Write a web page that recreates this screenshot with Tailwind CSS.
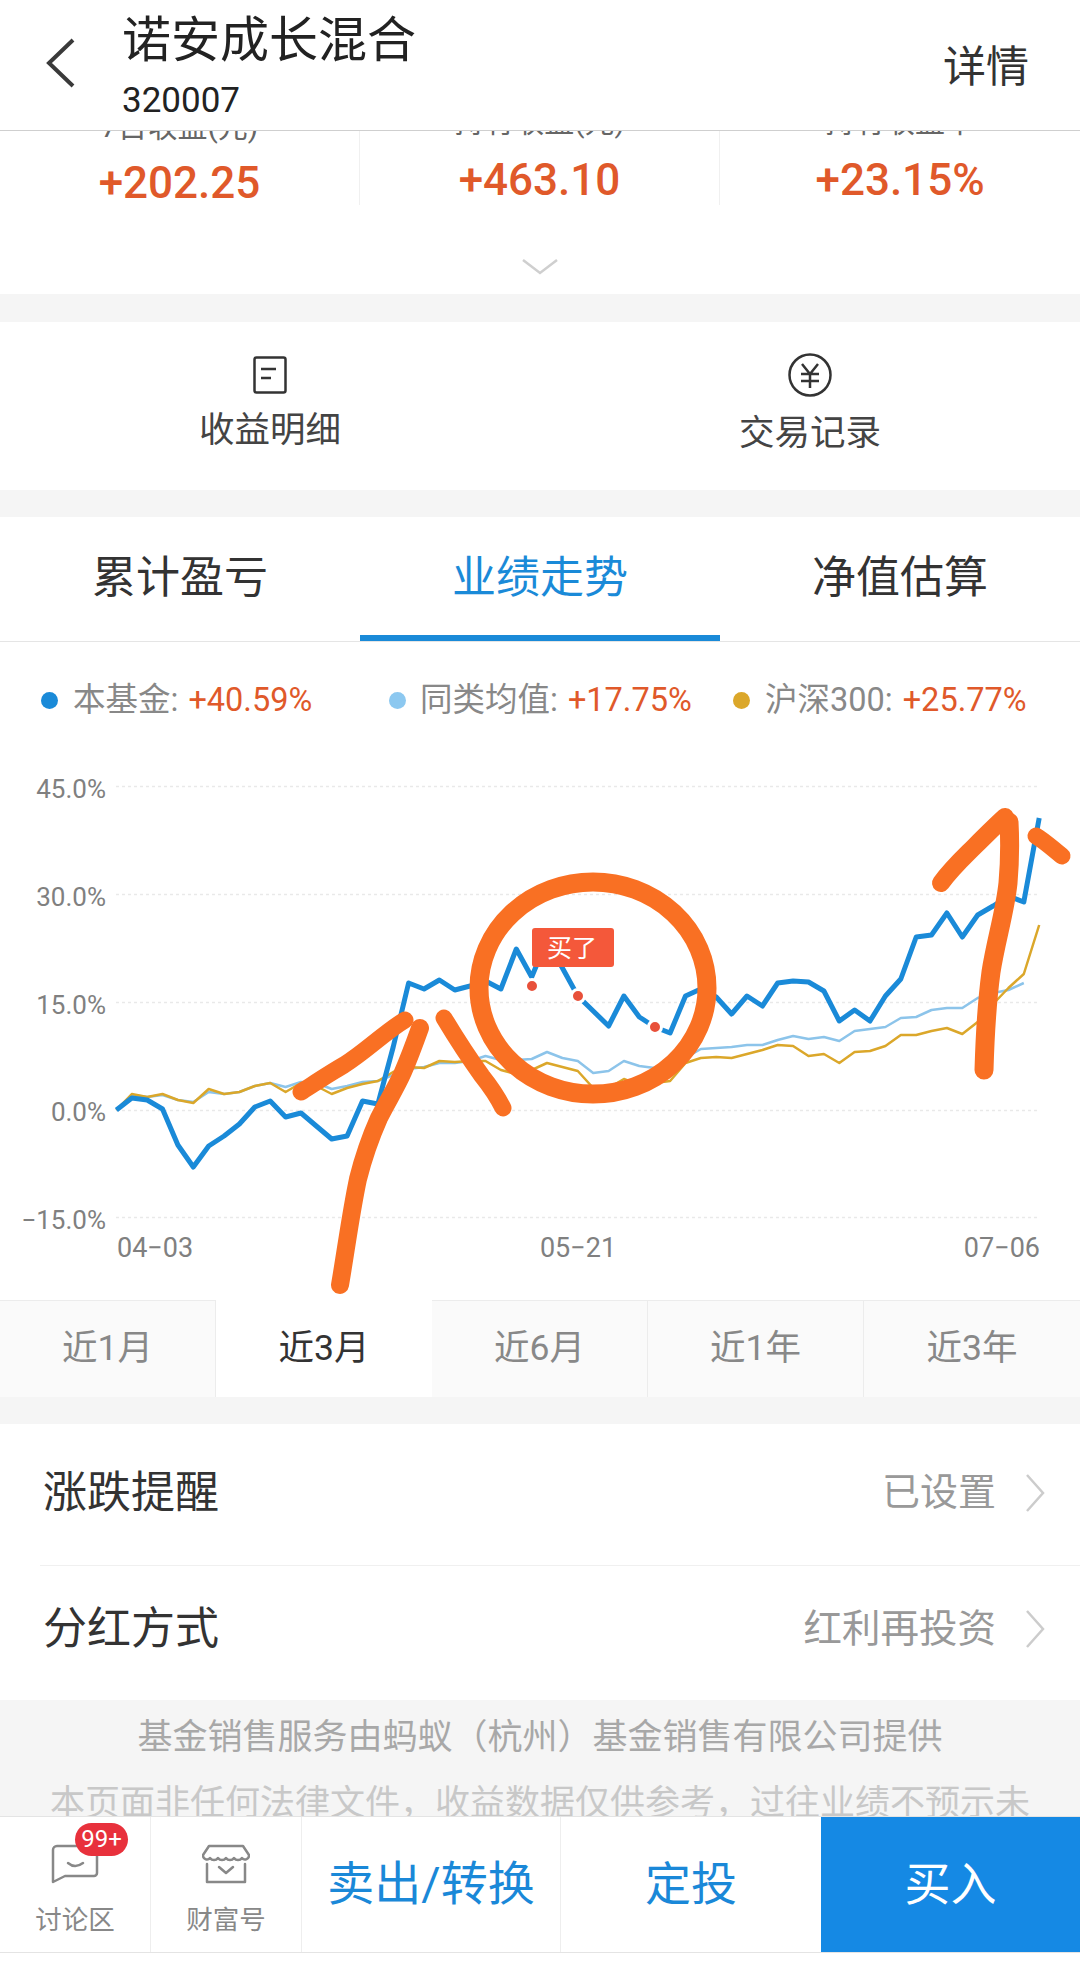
<!DOCTYPE html>
<html lang="zh-CN">

<head>
    <meta charset="utf-8" />
    <meta name="viewport" content="width=device-width, initial-scale=1" />
    <title>诺安成长混合</title>
    <script src="https://cdn.jsdelivr.net/npm/@tailwindcss/browser@4"></script>
</head>

<body class="bg-white">
    <div class="w-[1080px] h-[1968px] overflow-hidden flex flex-col bg-[#f5f5f5] text-[#333] font-['Roboto','Noto_Sans_CJK_SC',sans-serif]">

        <!-- header -->
        <header class="h-[131px] shrink-0 bg-white border-b border-[#cfcfcf] flex relative z-10">
            <svg class="w-[30px] h-[50px] ml-[45px] mt-[38px]" viewBox="0 0 30 50" fill="none" stroke="#3a3a3a" stroke-width="4">
                <path d="M28 2 L4 25 L28 48" />
            </svg>
            <div class="ml-[47px] flex-1">
                <div class="text-[49px] leading-[48px] mt-[17px] text-[#222]">诺安成长混合</div>
                <div class="text-[35px] leading-[36px] mt-[18px] text-[#222]">320007</div>
            </div>
            <div class="text-[43px] leading-[50px] mt-[42px] mr-[51px] text-[#333]">详情</div>
        </header>

        <!-- holdings summary, scrolled under the header -->
        <section class="h-[163px] shrink-0 bg-white overflow-hidden">
            <div class="grid grid-cols-3 h-[74px]">
                <div class="flex flex-col items-center border-r border-[#f0f0f0]">
                    <div class="text-[30px] leading-[30px] -mt-[19px] text-[#666] h-[30px]">7日收益(元)</div>
                    <div class="text-[44px] leading-[44px] mt-[19px] font-medium text-[#e0592a]">+202.25</div>
                </div>
                <div class="flex flex-col items-center border-r border-[#f0f0f0]">
                    <div class="text-[30px] leading-[30px] -mt-[24px] text-[#666] h-[30px]">持有收益(元)</div>
                    <div class="text-[44px] leading-[44px] mt-[21px] font-medium text-[#e0592a]">+463.10</div>
                </div>
                <div class="flex flex-col items-center">
                    <div class="text-[30px] leading-[30px] -mt-[24px] text-[#666] h-[30px]">持有收益率</div>
                    <div class="text-[44px] leading-[44px] mt-[21px] font-medium text-[#e0592a]">+23.15%</div>
                </div>
            </div>
            <svg class="w-[36px] h-[16px] mx-auto mt-[54px]" viewBox="0 0 36 16" fill="none" stroke="#cfcfcf" stroke-width="2.5">
                <path d="M1 1 L18 14 L35 1" />
            </svg>
        </section>

        <!-- detail links -->
        <section class="h-[168px] shrink-0 mt-[28px] bg-white grid grid-cols-2">
            <div class="flex flex-col items-center pt-[34px]">
                <svg class="w-[34px] h-[38px]" viewBox="0 0 34 38" fill="none" stroke="#333" stroke-width="2.5">
                    <rect x="1.5" y="1.5" width="31" height="35" rx="2" />
                    <path d="M8 13 H23 M8 22 H18" />
                </svg>
                <div class="text-[35.5px] leading-[40px] mt-[16px] text-[#444]">收益明细</div>
            </div>
            <div class="flex flex-col items-center pt-[31px]">
                <svg class="w-[44px] h-[44px]" viewBox="0 0 44 44" fill="none" stroke="#333" stroke-width="2.5">
                    <circle cx="22" cy="22" r="20.5" />
                    <path d="M14 11 L22 21 L30 11 M13 21 H31 M13 28 H31 M22 21 V35" />
                </svg>
                <div class="text-[35.5px] leading-[40px] mt-[16px] text-[#444]">交易记录</div>
            </div>
        </section>

        <!-- chart tabs -->
        <section class="h-[125px] shrink-0 mt-[27px] bg-white grid grid-cols-3 border-b border-[#e5e5e5]">
            <div class="flex items-center justify-center pt-[4px] border-b-[6px] border-transparent text-[44px] text-[#333]">累计盈亏</div>
            <div class="flex items-center justify-center pt-[4px] border-b-[6px] border-[#1a8ad8] text-[44px] text-[#1a8ad8]">业绩走势</div>
            <div class="flex items-center justify-center pt-[4px] border-b-[6px] border-transparent text-[44px] text-[#333]">净值估算</div>
        </section>

        <!-- legend + chart -->
        <section class="h-[658px] shrink-0 bg-white flex flex-col">
            <div class="h-[118px] shrink-0 flex items-center pb-[2px] pl-[41px] text-[32.5px] text-[#888]">
                <div class="w-[348px] flex items-center">
                    <span class="w-[17px] h-[17px] rounded-full bg-[#1a8ad8] mr-[15px]"></span>
                    <span>本基金:</span>
                    <span class="ml-[10px] text-[#e0592a]">+40.59%</span>
                </div>
                <div class="w-[344px] flex items-center">
                    <span class="w-[17px] h-[17px] rounded-full bg-[#8cc8f0] mr-[14px]"></span>
                    <span>同类均值:</span>
                    <span class="ml-[10px] text-[#e0592a]">+17.75%</span>
                </div>
                <div class="flex items-center">
                    <span class="w-[17px] h-[17px] rounded-full bg-[#dba72a] mr-[15px]"></span>
                    <span>沪深300:</span>
                    <span class="ml-[10px] text-[#e0592a]">+25.77%</span>
                </div>
            </div>
            <svg class="w-[1080px] h-[540px]" viewBox="0 760 1080 540" fill="none">
                <g stroke="#e9e9e9" stroke-width="1.5" stroke-dasharray="3 3">
                    <path d="M116 786.5 H1039 M116 894.5 H1039 M116 1002.5 H1039 M116 1110.5 H1039 M116 1217.5 H1039" />
                </g>
                <g class="fill-[#808080] text-[26px]" text-anchor="end">
                    <text x="106" y="798">45.0%</text>
                    <text x="106" y="906">30.0%</text>
                    <text x="106" y="1014">15.0%</text>
                    <text x="106" y="1121">0.0%</text>
                    <text x="106" y="1229">−15.0%</text>
                </g>
                <g class="fill-[#808080] text-[27px]">
                    <text x="117" y="1257">04−03</text>
                    <text x="578" y="1257" text-anchor="middle">05−21</text>
                    <text x="1040" y="1257" text-anchor="end">07−06</text>
                </g>

                <polyline id="line-avg" stroke="#8cc4ea" stroke-width="2.5" stroke-linejoin="round" />
                <polyline id="line-index" stroke="#dba72a" stroke-width="2.5" stroke-linejoin="round" />
                <polyline id="line-fund" stroke="#1a8ad8" stroke-width="5" stroke-linejoin="round" />

                <!-- buy markers -->
                <g fill="#e8503a" stroke="#fff" stroke-width="3">
                    <circle cx="532" cy="986" r="6.5" />
                    <circle cx="578" cy="996" r="6.5" />
                    <circle cx="655" cy="1027" r="6.5" />
                </g>
                <rect x="532" y="928" width="82" height="39" rx="3" fill="#f4583a" />
                <text x="572" y="957" text-anchor="middle" class="fill-white text-[25px]">买了</text>

                <!-- hand drawn marks on the screenshot -->
                <g stroke="#f97023" stroke-linecap="round" stroke-linejoin="round">
                    <path stroke-width="18" d="M340 1285 C346 1250 351 1212 358 1179 C364 1155 371 1136 379 1118 C388 1100 396 1088 403 1072 C410 1056 415 1042 420 1028" />
                    <path stroke-width="17" d="M301 1092 C315 1083 330 1073 344 1065 C365 1052 385 1032 405 1020" />
                    <path stroke-width="17" d="M444 1018 C456 1038 469 1058 482 1076 C490 1086 497 1096 503 1108" />
                    <ellipse cx="593" cy="988" rx="114" ry="106" stroke-width="19" />
                    <path stroke-width="19" d="M984 1070 C985 1036 987 1002 991 972 C996 940 1005 912 1008 883 C1010 860 1010 840 1009 822" />
                    <path stroke-width="18" d="M941 883 C952 868 963 858 974 847 C985 836 995 826 1005 817" />
                    <path stroke-width="17" d="M1036 836 C1046 842 1054 850 1062 856" />
                </g>
            </svg>
        </section>

        <!-- range selector -->
        <section class="h-[97px] shrink-0 grid grid-cols-5 text-[35.5px] text-[#888]">
            <div class="flex items-center justify-center bg-[#fafafa] border-t border-r border-[#ececec]">近1月</div>
            <div class="flex items-center justify-center bg-white text-[#333]">近3月</div>
            <div class="flex items-center justify-center bg-[#fafafa] border-t border-r border-[#ececec]">近6月</div>
            <div class="flex items-center justify-center bg-[#fafafa] border-t border-r border-[#ececec]">近1年</div>
            <div class="flex items-center justify-center bg-[#fafafa] border-t border-[#ececec]">近3年</div>
        </section>

        <!-- settings rows -->
        <section class="h-[276px] shrink-0 mt-[27px] bg-white">
            <div class="h-[142px] ml-[40px] pl-[3px] pr-[35px] pb-[4px] flex items-center border-b border-[#f0f0f0]">
                <div class="flex-1 text-[44px] text-[#333]">涨跌提醒</div>
                <div class="text-[38px] text-[#999]">已设置</div>
                <svg class="w-[20px] h-[38px] ml-[29px]" viewBox="0 0 20 38" fill="none" stroke="#ccc" stroke-width="2.5">
                    <path d="M2 1 L18 19 L2 37" />
                </svg>
            </div>
            <div class="h-[134px] ml-[40px] pl-[3px] pr-[35px] pb-[8px] flex items-center">
                <div class="flex-1 text-[44px] text-[#333]">分红方式</div>
                <div class="text-[38.5px] text-[#999]">红利再投资</div>
                <svg class="w-[20px] h-[38px] ml-[29px]" viewBox="0 0 20 38" fill="none" stroke="#ccc" stroke-width="2.5">
                    <path d="M2 1 L18 19 L2 37" />
                </svg>
            </div>
        </section>

        <!-- disclaimer, cut by the bottom bar -->
        <section class="h-[116px] shrink-0 overflow-hidden pt-[5px] text-[35px] leading-[66px] text-center whitespace-nowrap">
            <div class="text-[#a8a8a8]">基金销售服务由蚂蚁（杭州）基金销售有限公司提供</div>
            <div class="text-[#c8c8c8]">本页面非任何法律文件，收益数据仅供参考，过往业绩不预示未</div>
        </section>

        <!-- bottom bar -->
        <nav class="h-[152px] shrink-0 bg-white">
            <div class="h-[137px] flex border-t border-b border-[#e4e4e4]">
                <div class="w-[151px] border-r border-[#eee] flex flex-col items-center pt-[27px] relative">
                    <svg class="w-[48px] h-[40px]" viewBox="0 0 48 40" fill="none" stroke="#888" stroke-width="2.5" stroke-linejoin="round">
                        <path d="M6 2 H42 a4 4 0 0 1 4 4 V29 a3 3 0 0 1 -3 3 H14 L2 38 V6 a4 4 0 0 1 4 -4 z" />
                        <path d="M17 19 q7 6 15 0" stroke-linecap="round" />
                    </svg>
                    <div class="text-[26.5px] leading-[30px] mt-[21px] text-[#888]">讨论区</div>
                    <div class="absolute left-[75px] top-[6px] w-[53px] h-[33px] rounded-full bg-[#e8313c] text-white text-[24px] leading-[33px] text-center">99+</div>
                </div>
                <div class="w-[151px] border-r border-[#eee] flex flex-col items-center pt-[27px]">
                    <svg class="w-[48px] h-[40px]" viewBox="0 0 48 40" fill="none" stroke="#888" stroke-width="2.5" stroke-linecap="round" stroke-linejoin="round">
                        <path d="M7 2 H41 L47 11 a4 4 0 0 1 -7 3 a5 5 0 0 1 -8 0 a5 5 0 0 1 -8 0 a5 5 0 0 1 -8 0 a5 5 0 0 1 -8 0 a4 4 0 0 1 -7 -3 z" />
                        <path d="M5 20 V38 H43 V20 M17 23 L24 29 L31 23" />
                    </svg>
                    <div class="text-[26.5px] leading-[30px] mt-[21px] text-[#888]">财富号</div>
                </div>
                <div class="w-[259px] border-r border-[#eee] flex items-center justify-center text-[47px] text-[#1a88d8]">卖出/转换</div>
                <div class="w-[260px] flex items-center justify-center text-[46px] text-[#1a88d8]">定投</div>
                <div class="flex-1 bg-[#1589e4] flex items-center justify-center text-[46px] text-white">买入</div>
            </div>
        </nav>
    </div>

    <script>
        // y pixel of each daily sample, from the left edge of the plot
        const fund = [1110, 1098, 1100, 1109, 1145, 1167, 1146, 1136, 1124, 1107, 1101, 1117, 1113, 1126, 1139, 1136, 1101, 1104, 1047, 983, 989, 980, 990, 986, 981, 989, 949, 977, 940, 968, 996, 1011, 1026, 996, 1017, 1027, 1033, 996, 989, 997, 1014, 996, 1006, 983, 981, 982, 991, 1021, 1010, 1021, 996, 979, 937, 935, 913, 937, 915, 906, 896, 902, 818];
        const avg = [1110, 1095, 1097, 1095, 1100, 1102, 1092, 1094, 1092, 1086, 1083, 1087, 1082, 1083, 1089, 1086, 1082, 1081, 1075, 1069, 1067, 1063, 1063, 1061, 1056, 1060, 1060, 1059, 1052, 1058, 1061, 1073, 1071, 1061, 1066, 1068, 1067, 1058, 1049, 1048, 1047, 1045, 1045, 1040, 1036, 1039, 1037, 1041, 1031, 1029, 1027, 1018, 1017, 1010, 1008, 1008, 998, 993, 990, 983];
        const index = [1110, 1094, 1097, 1094, 1100, 1103, 1089, 1094, 1092, 1086, 1083, 1092, 1083, 1086, 1094, 1088, 1084, 1081, 1072, 1067, 1068, 1061, 1062, 1061, 1061, 1070, 1074, 1070, 1063, 1067, 1071, 1088, 1088, 1079, 1085, 1083, 1081, 1063, 1058, 1057, 1058, 1054, 1050, 1045, 1046, 1056, 1054, 1063, 1052, 1051, 1046, 1035, 1035, 1031, 1028, 1034, 1022, 1004, 988, 974, 925];

        function toPoints(values) {
            return values.map((y, i) => `${(116.4 + i * 15.38).toFixed(1)},${y}`).join(' ');
        }

        document.getElementById('line-fund').setAttribute('points', toPoints(fund));
        document.getElementById('line-avg').setAttribute('points', toPoints(avg));
        document.getElementById('line-index').setAttribute('points', toPoints(index));
    </script>
</body>

</html>
